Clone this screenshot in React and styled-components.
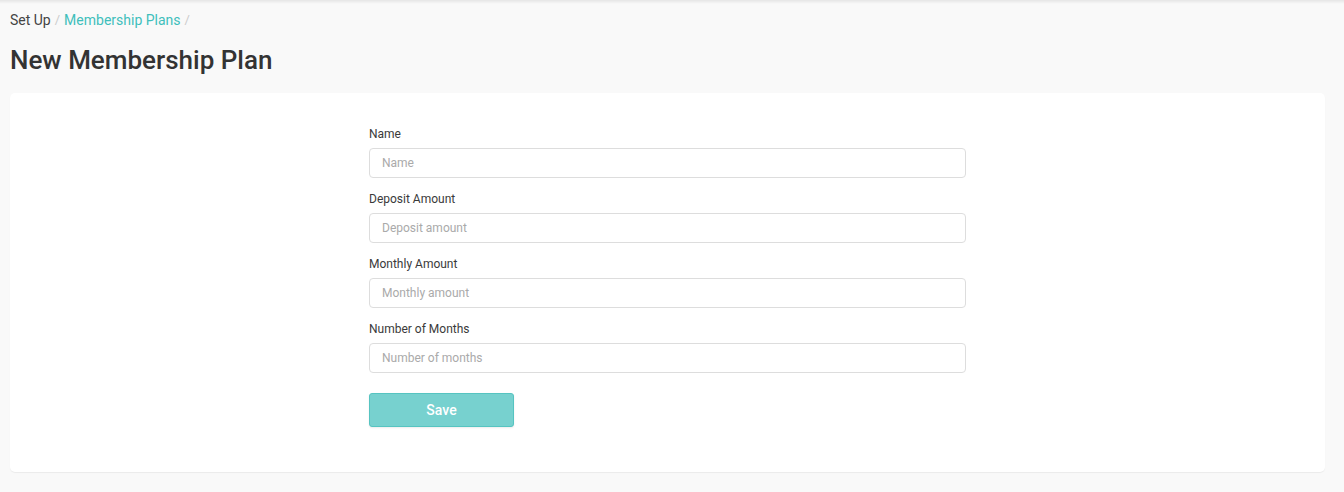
import React from "react";
import styled, { createGlobalStyle } from "styled-components";

const GlobalStyle = createGlobalStyle`
  html, body {
    margin: 0;
    padding: 0;
    background: #f9f9f9;
    font-family: Roboto, "Liberation Sans", Arial, sans-serif;
    color: #333;
  }
  * { box-sizing: border-box; }
`;

const Page = styled.div`
  position: relative;
  min-height: 492px;
  padding: 10px 19px 20px 10px;
  &::before {
    content: "";
    position: absolute;
    left: 0;
    right: 0;
    top: 0;
    height: 4px;
    background: linear-gradient(rgba(0, 0, 0, 0.08), rgba(0, 0, 0, 0));
  }
`;

const Breadcrumb = styled.nav`
  display: flex;
  align-items: center;
  font-size: 14px;
  line-height: 20px;
  height: 20px;
`;

const Crumb = styled.span`
  color: ${(p) => (p.$link ? "#3fbfbc" : "#444")};
`;

const Sep = styled.span`
  color: #ccc;
  margin: 0 4px;
  font-size: 13px;
`;

const Title = styled.h1`
  margin: 15px 0 0;
  font-size: 26px;
  line-height: 30px;
  font-weight: 500;
  color: #333;
`;

const Card = styled.div`
  margin-top: 18px;
  background: #fff;
  border-radius: 5px;
  box-shadow: 0 1px 1px rgba(0, 0, 0, 0.06);
  height: 379px;
  padding-top: 34px;
  display: flex;
  justify-content: center;
`;

const Form = styled.form`
  width: 597px;
  display: flex;
  flex-direction: column;
`;

const Field = styled.div`
  display: flex;
  flex-direction: column;
  margin-bottom: 14px;
`;

const Label = styled.label`
  font-size: 12px;
  line-height: 14px;
  color: #3a3a3a;
  margin-bottom: 7px;
`;

const Input = styled.input`
  height: 30px;
  border: 1px solid #ddd;
  border-radius: 4px;
  padding: 0 12px;
  font-family: inherit;
  font-size: 12px;
  color: #333;
  outline: none;
  &::placeholder {
    color: #aaa;
  }
`;

const SaveButton = styled.button`
  margin-top: 6px;
  width: 145px;
  height: 34px;
  border: 1px solid #56c4c1;
  border-radius: 3px;
  background: #77d1cf;
  color: #fff;
  font-family: inherit;
  font-weight: 500;
  font-size: 14px;
  box-shadow: 0 1px 2px rgba(0, 0, 0, 0.08);
  cursor: pointer;
`;

const fields = [
  { label: "Name", placeholder: "Name" },
  { label: "Deposit Amount", placeholder: "Deposit amount" },
  { label: "Monthly Amount", placeholder: "Monthly amount" },
  { label: "Number of Months", placeholder: "Number of months" },
];

export default function App() {
  return (
    <>
      <GlobalStyle />
      <Page>
        <Breadcrumb>
          <Crumb>Set Up</Crumb>
          <Sep>/</Sep>
          <Crumb $link>Membership Plans</Crumb>
          <Sep>/</Sep>
        </Breadcrumb>
        <Title>New Membership Plan</Title>
        <Card>
          <Form onSubmit={(e) => e.preventDefault()}>
            {fields.map((f) => (
              <Field key={f.label}>
                <Label>{f.label}</Label>
                <Input placeholder={f.placeholder} />
              </Field>
            ))}
            <SaveButton type="submit">Save</SaveButton>
          </Form>
        </Card>
      </Page>
    </>
  );
}
